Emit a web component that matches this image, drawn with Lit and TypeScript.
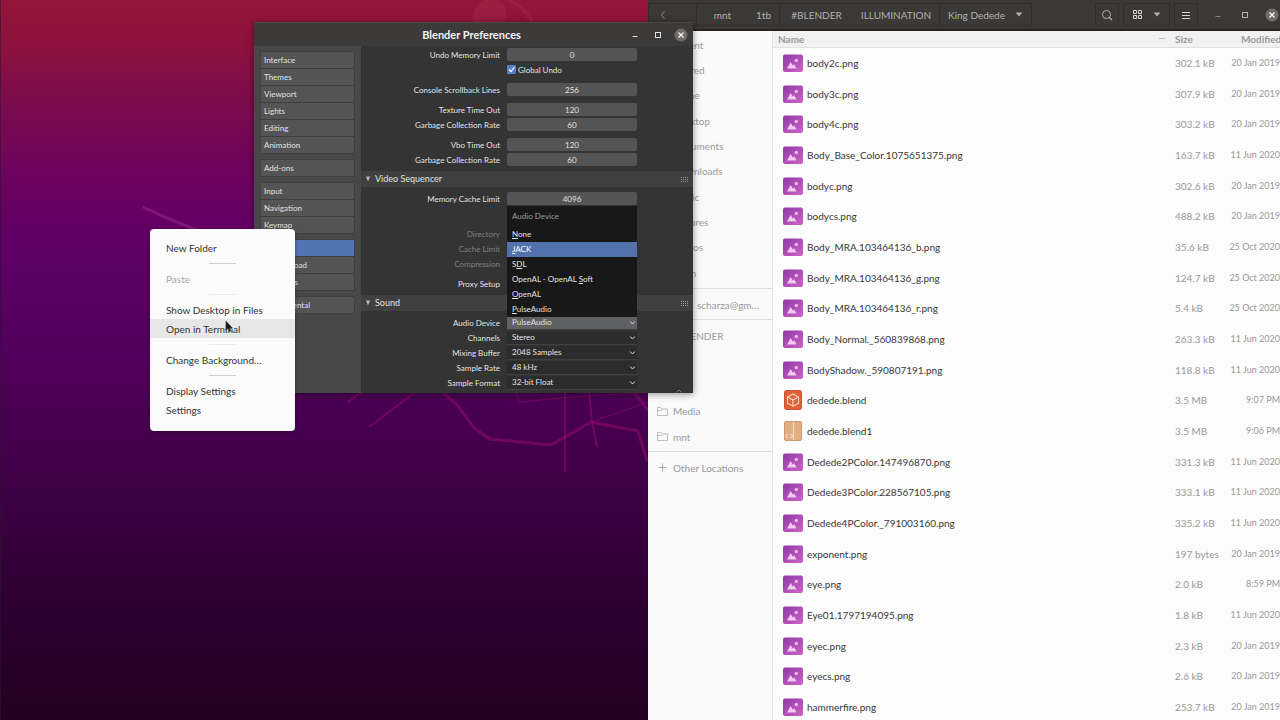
import { LitElement, html, css, svg, nothing } from "lit";
import { customElement } from "lit/decorators.js";
import { classMap } from "lit/directives/class-map.js";

const base = css`
  :host {
    display: block;
    box-sizing: border-box;
    font-family: Lato, "Open Sans", sans-serif;
    font-size: 10px;
    line-height: 14px;
  }
  *, *::before, *::after { box-sizing: border-box; }
  button, input, select {
    font: inherit;
    color: inherit;
    background: none;
    border: 0;
    border-radius: 0;
    margin: 0;
    padding: 0;
    outline: 0;
  }
  ul { list-style: none; margin: 0; padding: 0; }
  svg { display: block; flex: none; }
`;

const closeIcon = svg`
  <svg width="16" height="16" viewBox="0 0 16 16">
    <circle cx="8" cy="8" r="6.5" fill="#6e6b68"/>
    <path d="M5.5 5.5l5 5M10.5 5.5l-5 5" stroke="#f4f4f4" stroke-width="1.3"/>
  </svg>`;
const maxIcon = svg`
  <svg width="16" height="16" viewBox="0 0 16 16">
    <rect x="5.5" y="5.5" width="5" height="5" fill="none" stroke="currentColor"/>
  </svg>`;
const minIcon = svg`
  <svg width="16" height="16" viewBox="0 0 16 16">
    <path d="M5.5 9.5h5" stroke="currentColor"/>
  </svg>`;

type Kind = "image" | "blend" | "archive";
interface FileRow { name: string; size: string; date: string; kind: Kind }

const f = (name: string, size: string, date: string, kind: Kind = "image"): FileRow => ({ name, size, date, kind });

const FILES: FileRow[] = [
  f("body2c.png", "302.1 kB", "20 Jan 2019"),
  f("body3c.png", "307.9 kB", "20 Jan 2019"),
  f("body4c.png", "303.2 kB", "20 Jan 2019"),
  f("Body_Base_Color.1075651375.png", "163.7 kB", "11 Jun 2020"),
  f("bodyc.png", "302.6 kB", "20 Jan 2019"),
  f("bodycs.png", "488.2 kB", "20 Jan 2019"),
  f("Body_MRA.103464136_b.png", "35.6 kB", "25 Oct 2020"),
  f("Body_MRA.103464136_g.png", "124.7 kB", "25 Oct 2020"),
  f("Body_MRA.103464136_r.png", "5.4 kB", "25 Oct 2020"),
  f("Body_Normal._560839868.png", "263.3 kB", "11 Jun 2020"),
  f("BodyShadow._590807191.png", "118.8 kB", "11 Jun 2020"),
  f("dedede.blend", "3.5 MB", "9:07 PM", "blend"),
  f("dedede.blend1", "3.5 MB", "9:06 PM", "archive"),
  f("Dedede2PColor.147496870.png", "331.3 kB", "11 Jun 2020"),
  f("Dedede3PColor.228567105.png", "333.1 kB", "11 Jun 2020"),
  f("Dedede4PColor._791003160.png", "335.2 kB", "11 Jun 2020"),
  f("exponent.png", "197 bytes", "20 Jan 2019"),
  f("eye.png", "2.0 kB", "8:59 PM"),
  f("Eye01.1797194095.png", "1.8 kB", "11 Jun 2020"),
  f("eyec.png", "2.3 kB", "20 Jan 2019"),
  f("eyecs.png", "2.6 kB", "20 Jan 2019"),
  f("hammerfire.png", "253.7 kB", "20 Jan 2019"),
];

@customElement("file-icon")
class FileIcon extends LitElement {
  static properties = { kind: { type: String } };
  declare kind: Kind;
  static styles = css`:host { display: block; width: 20px; height: 20px; } svg { display: block; }`;
  render() {
    if (this.kind === "blend") {
      return html`<svg width="20" height="20" viewBox="0 0 20 20">
        <rect x="1.5" y=".5" width="17" height="19" rx="2" fill="#e0613a" stroke="#c9512f"/>
        <path d="M10 4l5.500 3v6.200l-5.500 3-5.500-3V7zM4.500 7l5.500 3 5.500-3M10 10v6" fill="none" stroke="#ffd9c4" stroke-width="1.100"/>
      </svg>`;
    }
    if (this.kind === "archive") {
      return html`<svg width="20" height="20" viewBox="0 0 20 20">
        <rect x="1.500" y=".500" width="17" height="19" rx="1.500" fill="#e3ae82" stroke="#cb9a72"/>
        <path d="M10.500 1v18" stroke="#f6dcc0" stroke-width="1.200"/>
        <path d="M4.500 13l-2 2 2 2M7.500 13l2 2-2 2" fill="none" stroke="#fff1e0"/>
      </svg>`;
    }
    return html`<svg width="20" height="20" viewBox="0 0 20 20">
      <defs><linearGradient id="g" x1="0" y1="0" x2="1" y2="1">
        <stop offset="0" stop-color="#8c3aa6"/><stop offset="1" stop-color="#cf62c8"/>
      </linearGradient></defs>
      <rect x="0" y="1.500" width="20" height="17.500" rx="2" fill="url(#g)"/>
      <path d="M4 15.500l3.700-6.500 2.300 3.800 1.200-1.500 2.300 4.200z" fill="#f3c9f0"/>
      <circle cx="13.300" cy="7.500" r="1.700" fill="#f0bdea"/>
    </svg>`;
  }
}

@customElement("files-window")
class FilesWindow extends LitElement {
  static styles = [base, css`
    :host { display: flex; flex-direction: column; background: #fcfcfc; overflow: hidden; color: #3c3c3c; }
    header {
      flex: none;
      display: flex;
      align-items: center;
      height: 31px;
      padding-right: 10px;
      background: #3b3937;
      border-bottom: 2px solid #242322;
      color: #b3b0ac;
    }
    .nav { display: flex; align-items: center; }
    .cell {
      display: flex;
      align-items: center;
      justify-content: center;
      gap: 10px;
      height: 23px;
      padding: 0 8px;
    }
    .boxed { border: 1px solid #312f2d; }
    .back { width: 49px; justify-content: flex-start; padding: 0 5px; }
    .path { border: 1px solid #312f2d; border-left: 0; }
    .path button { height: 21px; padding: 0; white-space: nowrap; }
    .a { width: 51px; }
    .b { width: 31px; }
    .c { width: 74px; border-left: 1px solid #312f2d; }
    .d { width: 86px; }
    .e { width: 92px; border-left: 1px solid #312f2d; }
    .grow { flex: 1; }
    .tools { display: flex; gap: 4px; align-items: center; }
    .tool { width: 24px; padding: 0; }
    .wide { width: 47px; padding: 0; }
    .win { display: flex; gap: 11px; padding-left: 12px; align-items: center; }
    .min { opacity: .6; }
    .body { flex: 1; display: flex; min-height: 0; }
    nav { flex: none; width: 125px; padding-top: 1px; border-right: 1px solid #e3e3e3; color: #999; background: #fafafa; }
    nav a {
      display: flex;
      align-items: center;
      gap: 5px;
      height: 25px;
      padding-left: 9px;
      color: inherit;
      text-decoration: none;
      white-space: nowrap;
    }
    nav li:nth-child(3n) a { height: 26px; }
    nav ul { padding: 0 0 3px; border-bottom: 1px solid #e0e0e0; margin-bottom: 3px; }
    nav .short { padding-bottom: 2px; }
    nav ul:last-child { border: 0; }
    .slot { width: 11px; }
    .mail { padding-left: 24px; }
    .gap { height: 50px; }
    table { flex: 1; width: 100%; border-collapse: collapse; table-layout: fixed; align-self: flex-start; }
    th {
      height: 16px;
      padding: 0;
      text-align: left;
      background: #f1f1f1;
      border-bottom: 1px solid #e2e2e2;
      color: #999;
      font-weight: 700;
    }
    th:first-child { padding-left: 5px; }
    th:last-child { padding-left: 12px; }
    td { height: 31px; padding: 0; color: #999; white-space: nowrap; }
    tr:nth-child(3n) td { height: 30px; }
    .size { width: 54px; }
    .mod { width: 61px; }
    td:last-child { text-align: right; padding-right: 10px; font-size: 9px; }
    .head { display: flex; justify-content: space-between; align-items: center; padding-right: 9px; }
    .file { display: flex; align-items: center; gap: 4px; padding-left: 10px; color: #383838; }
  `];

  folder = svg`<svg width="11" height="11" viewBox="0 0 11 11"><path d="M.5 9.500v-8h3.500l1 1.500h5.500v6.500zM.5 4.500h4l1-1.500" fill="none" stroke="#bdbdbd"/></svg>`;
  plus = svg`<svg width="11" height="11" viewBox="0 0 11 11"><path d="M5.500 1.500v8M1.500 5.500h8" stroke="#a8a8a8"/></svg>`;
  caret = svg`<svg width="8" height="5" viewBox="0 0 8 5"><path d="M.5.500h7L4 4.500z" fill="currentColor"/></svg>`;

  link(text: string, icon: unknown = nothing, mail = false) {
    return html`<li><a href="#"><span class="slot">${icon}</span><span class=${classMap({ mail })}>${text}</span></a></li>`;
  }

  render() {
    return html`
      <header>
        <div class="nav">
          <button class="cell boxed back" aria-label="Back">
            <svg width="16" height="14" viewBox="0 0 16 14"><path d="M10.500 3L7.500 7l3 4" fill="none" stroke="#8f8c89"/></svg>
          </button>
          <div class="nav path">
            <button class="cell a">mnt</button>
            <button class="cell b">1tb</button>
            <button class="cell c">#BLENDER</button>
            <button class="cell d">ILLUMINATION</button>
            <button class="cell e">King Dedede ${this.caret}</button>
          </div>
        </div>
        <span class="grow"></span>
        <div class="tools">
          <button class="cell boxed tool" aria-label="Search">
            <svg width="12" height="12" viewBox="0 0 12 12"><circle cx="5.500" cy="5.500" r="4" fill="none" stroke="currentColor"/><path d="M8.500 8.500l2.500 2.500" stroke="currentColor" stroke-width="1.200"/></svg>
          </button>
          <button class="cell boxed wide" aria-label="View options">
            <svg width="11" height="11" viewBox="0 0 11 11"><path d="M1.500 1.500h3v3h-3zM6.500 1.500h3v3h-3zM1.500 6.500h3v3h-3zM6.500 6.500h3v3h-3z" fill="none" stroke="#d6d3d0"/></svg>
            ${this.caret}
          </button>
          <button class="cell boxed tool" aria-label="Menu">
            <svg width="10" height="10" viewBox="0 0 10 10"><path d="M1 2.500h8M1 5.500h8M1 8.500h8" stroke="#d6d3d0"/></svg>
          </button>
        </div>
        <div class="win">
          <button class="min" aria-label="Minimize">${minIcon}</button>
          <button aria-label="Maximize">${maxIcon}</button>
          <button aria-label="Close">${closeIcon}</button>
        </div>
      </header>
      <div class="body">
        <nav>
          <ul>${["Recent", "Starred", "Home", "Desktop", "Documents", "Downloads", "Music", "Pictures", "Videos", "Trash"].map((t) => this.link(t))}</ul>
          <ul class="short">${this.link("scharza@gm…", nothing, true)}</ul>
          <ul class="short">
            ${this.link("#BLENDER")}
            <li class="gap"></li>
            ${this.link("Media", this.folder)}
            ${this.link("mnt", this.folder)}
          </ul>
          <ul>${this.link("Other Locations", this.plus)}</ul>
        </nav>
        <table>
          <colgroup><col><col class="size"><col class="mod"></colgroup>
          <thead><tr>
            <th><div class="head">Name
              <svg width="8" height="5" viewBox="0 0 8 5"><path d="M1 2.500h6" stroke="#bcbcbc"/></svg></div></th>
            <th>Size</th><th>Modified</th>
          </tr></thead>
          <tbody>
            ${FILES.map((r) => html`<tr>
              <td><div class="file"><file-icon .kind=${r.kind}></file-icon>${r.name}</div></td>
              <td>${r.size}</td><td>${r.date}</td>
            </tr>`)}
          </tbody>
        </table>
      </div>`;
  }
}

@customElement("blender-preferences")
class BlenderPreferences extends LitElement {
  static styles = [base, css`
    :host {
      background: #343434;
      color: #e2e2e2;
      font-size: 8px;
      line-height: 12px;
      box-shadow: 0 1px 7px rgba(0, 0, 0, .45);
      overflow: hidden;
    }
    header {
      display: grid;
      grid-template-columns: 1fr auto 1fr;
      align-items: center;
      height: 24px;
      padding-right: 4px;
      background: #3c3b3a;
      border-top: 1px solid #4a4846;
    }
    h1 { grid-column: 2; margin: 0; font-size: 11px; line-height: 14px; font-weight: 700; color: #f2f2f2; }
    .win { display: flex; gap: 7px; justify-content: flex-end; }
    .body { display: flex; height: 347px; }
    .side { flex: none; width: 107px; padding: 5px 6px; background: #484848; display: flex; flex-direction: column; gap: 5px; }
    .group { background: #545454; border: 1px solid #3f3f3f; border-top: 0; border-radius: 2px; }
    .group button { display: block; width: 100%; height: 17px; padding-left: 3px; text-align: left; border-top: 1px solid #3f3f3f; }
    .group .on { background: #5274b4; color: #fff; }
    main { flex: 1; min-width: 0; padding-top: 1px; position: relative; }
    .rows { padding: 0 56px 4px 8px; display: flex; flex-direction: column; gap: 5px; }
    .row { display: grid; grid-template-columns: 1fr 130px; gap: 7px; align-items: center; height: 15px; position: relative; }
    .row > label, .row > .cap { text-align: right; white-space: nowrap; }
    .dim { color: #808080; }
    .num { width: 130px; height: 13px; text-align: center; background: #545454; border-radius: 2px; }
    .row > .check { grid-column: 2; display: flex; align-items: center; gap: 2px; }
    .tick { position: relative; width: 9px; height: 9px; }
    .tick input { appearance: none; display: block; width: 9px; height: 9px; background: #5680c2; border-radius: 1px; }
    .tick svg { position: absolute; inset: 0; pointer-events: none; }
    h2 {
      display: flex;
      align-items: center;
      gap: 4px;
      height: 16px;
      margin: 0 0 4px;
      padding: 0 4px 0 4px;
      background: #404040;
      font-size: 9px;
      font-weight: 400;
      line-height: 12px;
    }
    h2 span { flex: 1; }
    .sel { position: relative; }
    .sel select { display: block; appearance: none; width: 130px; height: 14px; padding: 0 5px; background: #2c2c2c; border-bottom: 1px solid #404040; }
    .sel .hot { background: #606165; }
    .sel > svg { position: absolute; right: 1px; top: 4px; pointer-events: none; }
    .menu { position: absolute; left: 0; right: 0; bottom: 13px; background: #181818; }
    .menu p { margin: 0; height: 21px; padding: 4px 5px; color: #9a9a9a; }
    .menu button { display: block; width: 100%; height: 15px; padding: 0 5px; text-align: left; }
    .menu .on { background: #5272ae; color: #fff; }
    .hidden { height: 10px; }
    .more { position: absolute; right: 10px; bottom: 0; }
  `];

  num(label: string, value: string, id: string) {
    return html`<div class="row"><label for=${id}>${label}</label><input class="num" id=${id} .value=${value}></div>`;
  }

  select(label: string, value: string, id: string, menu: unknown = nothing) {
    return html`<div class="row"><label for=${id}>${label}</label>
      <div class="sel">
        <select id=${id} class=${classMap({ hot: menu !== nothing })}><option>${value}</option></select>
        <svg width="7" height="6" viewBox="0 0 7 6"><path d="M1.200 1.500l2.300 2.500 2.300-2.500" fill="none" stroke="#ddd"/></svg>
        ${menu}
      </div></div>`;
  }

  heading(text: string) {
    return html`<h2>
      <svg width="6" height="6" viewBox="0 0 6 6"><path d="M1 .500h4L3 5.500z" fill="#bbb"/></svg>
      <span>${text}</span>
      <svg width="8" height="5" viewBox="0 0 8 5"><path d="M0 .5h8M0 2.500h8M0 4.500h8" stroke="#999" stroke-dasharray="1 1"/></svg>
    </h2>`;
  }

  render() {
    const groups = [
      ["Interface", "Themes", "Viewport", "Lights", "Editing", "Animation"],
      ["Add-ons"],
      ["Input", "Navigation", "Keymap"],
      ["System", "Save & Load", "File Paths"],
      ["Experimental"],
    ];
    const menu = html`<div class="menu">
      <p>Audio Device</p>
      <button><u>N</u>one</button>
      <button class="on"><u>J</u>ACK</button>
      <button>S<u>D</u>L</button>
      <button>OpenAL - OpenAL <u>S</u>oft</button>
      <button><u>O</u>penAL</button>
      <button><u>P</u>ulseAudio</button>
    </div>`;
    return html`
      <header>
        <h1>Blender Preferences</h1>
        <div class="win">
          <button aria-label="Minimize">${minIcon}</button>
          <button aria-label="Maximize">${maxIcon}</button>
          <button aria-label="Close">${closeIcon}</button>
        </div>
      </header>
      <div class="body">
        <div class="side">
          ${groups.map((g) => html`<div class="group">${g.map((t) => html`<button class=${classMap({ on: t === "System" })}>${t}</button>`)}</div>`)}
        </div>
        <main>
          <div class="rows">
            <div>
              ${this.num("Undo Memory Limit", "0", "undo")}
              <div class="row"><label class="check">
                <span class="tick"><input type="checkbox" checked>
                  <svg width="9" height="9" viewBox="0 0 9 9"><path d="M2 4.500l2 2 3.500-4.500" fill="none" stroke="#fff" stroke-width="1.200"/></svg>
                </span>Global Undo</label></div>
            </div>
            <div>${this.num("Console Scrollback Lines", "256", "lines")}</div>
            <div>${this.num("Texture Time Out", "120", "tex")}${this.num("Garbage Collection Rate", "60", "gc1")}</div>
            <div>${this.num("Vbo Time Out", "120", "vbo")}${this.num("Garbage Collection Rate", "60", "gc2")}</div>
          </div>
          ${this.heading("Video Sequencer")}
          <div class="rows">
            <div>${this.num("Memory Cache Limit", "4096", "cache")}</div>
            <div class="hidden"></div>
            <div class="dim">
              <div class="row"><span class="cap">Directory</span></div>
              <div class="row"><span class="cap">Cache Limit</span></div>
              <div class="row"><span class="cap">Compression</span></div>
            </div>
            <div class="row"><span class="cap">Proxy Setup</span></div>
          </div>
          ${this.heading("Sound")}
          <div class="rows">
            <div>
              ${this.select("Audio Device", "PulseAudio", "dev", menu)}
              ${this.select("Channels", "Stereo", "ch")}
              ${this.select("Mixing Buffer", "2048 Samples", "buf")}
              ${this.select("Sample Rate", "48 kHz", "rate")}
              ${this.select("Sample Format", "32-bit Float", "fmt")}
            </div>
          </div>
          <svg class="more" width="8" height="4" viewBox="0 0 8 4"><path d="M1.500 3.500L4 1l2.500 2.500" fill="none" stroke="#777"/></svg>
        </main>
      </div>`;
  }
}

@customElement("desktop-menu")
class DesktopMenu extends LitElement {
  static styles = [base, css`
    :host {
      background: #fbfbfb;
      color: #333;
      border-radius: 4px;
      padding: 9px 0 12px;
      box-shadow: 0 1px 4px rgba(0, 0, 0, .35);
    }
    button { display: block; width: 100%; height: 19px; padding-left: 16px; text-align: left; }
    hr { width: 27px; height: 1px; margin: 6px auto 5px; border: 0; background: #cfcfcf; }
    .faint { background: #ececec; }
    .off { color: #a8a8a8; }
    .hover { background: #e7e7e7; }
  `];
  render() {
    return html`
      <button>New Folder</button>
      <hr>
      <button class="off">Paste</button>
      <hr class="faint">
      <button>Show Desktop in Files</button>
      <button class="hover">Open in Terminal</button>
      <hr class="faint">
      <button>Change Background…</button>
      <hr>
      <button>Display Settings</button>
      <button>Settings</button>`;
  }
}

@customElement("app-root")
class AppRoot extends LitElement {
  static styles = [base, css`
    :host {
      position: relative;
      height: 100vh;
      overflow: hidden;
      background: linear-gradient(#941539 0, #8d123e 6%, #7d0c4c 14%, #6e045c 23%, #610066 33%, #50005a 50%, #480050 58%, #3d0044 69%, #2e0032 83%, #220020 100%);
    }
    .art { position: absolute; left: 0; top: 0; }
    files-window { position: absolute; left: 648px; right: -10px; top: 0; bottom: 0; }
    blender-preferences { position: absolute; left: 254px; top: 22px; width: 439px; }
    desktop-menu { position: absolute; left: 150px; top: 229px; width: 145px; }
    .pointer { position: absolute; left: 225px; top: 320px; }
  `];
  render() {
    return html`
      <svg class="art" width="648" height="720" viewBox="0 0 648 720" fill="none" stroke="#8d0a68" stroke-opacity=".6">
        <rect width="1" height="720" fill="#2c1430" stroke="none" opacity=".6"/>
        <path d="M472 22q2-18 12-22h14q10 4 8 22z" fill="#c04058" opacity=".22" stroke="none"/>
        <path d="M508 0q16 6 24 22" stroke="#c04058" stroke-width="4" stroke-opacity=".2"/>
        <path d="M143 207l24 11 32 13" stroke="#a03090" stroke-width="3" stroke-opacity=".45"/>
        <path d="M440 390l18 16 16 22 16 11 61 6 40-23 47 9 9 30" stroke-width="3"/>
        <path d="M565 390v82M589 390l3 32 5 25M418 390l-49 37M364 390l-16 12" stroke-width="2"/>
        <path d="M514 390l6 12 40-4 88-6M591 422l57-20" stroke-width="1"/>
        <path d="M632 390l16 20" stroke-width="3"/>
      </svg>
      <files-window></files-window>
      <blender-preferences></blender-preferences>
      <desktop-menu></desktop-menu>
      <svg class="pointer" width="9" height="13" viewBox="0 0 9 13"><path d="M.8.800v10l2.200-2.200 1.600 3.400 1.500-.7-1.500-3.300h3z" fill="#161616" stroke="#777" stroke-width=".4"/></svg>`;
  }
}
